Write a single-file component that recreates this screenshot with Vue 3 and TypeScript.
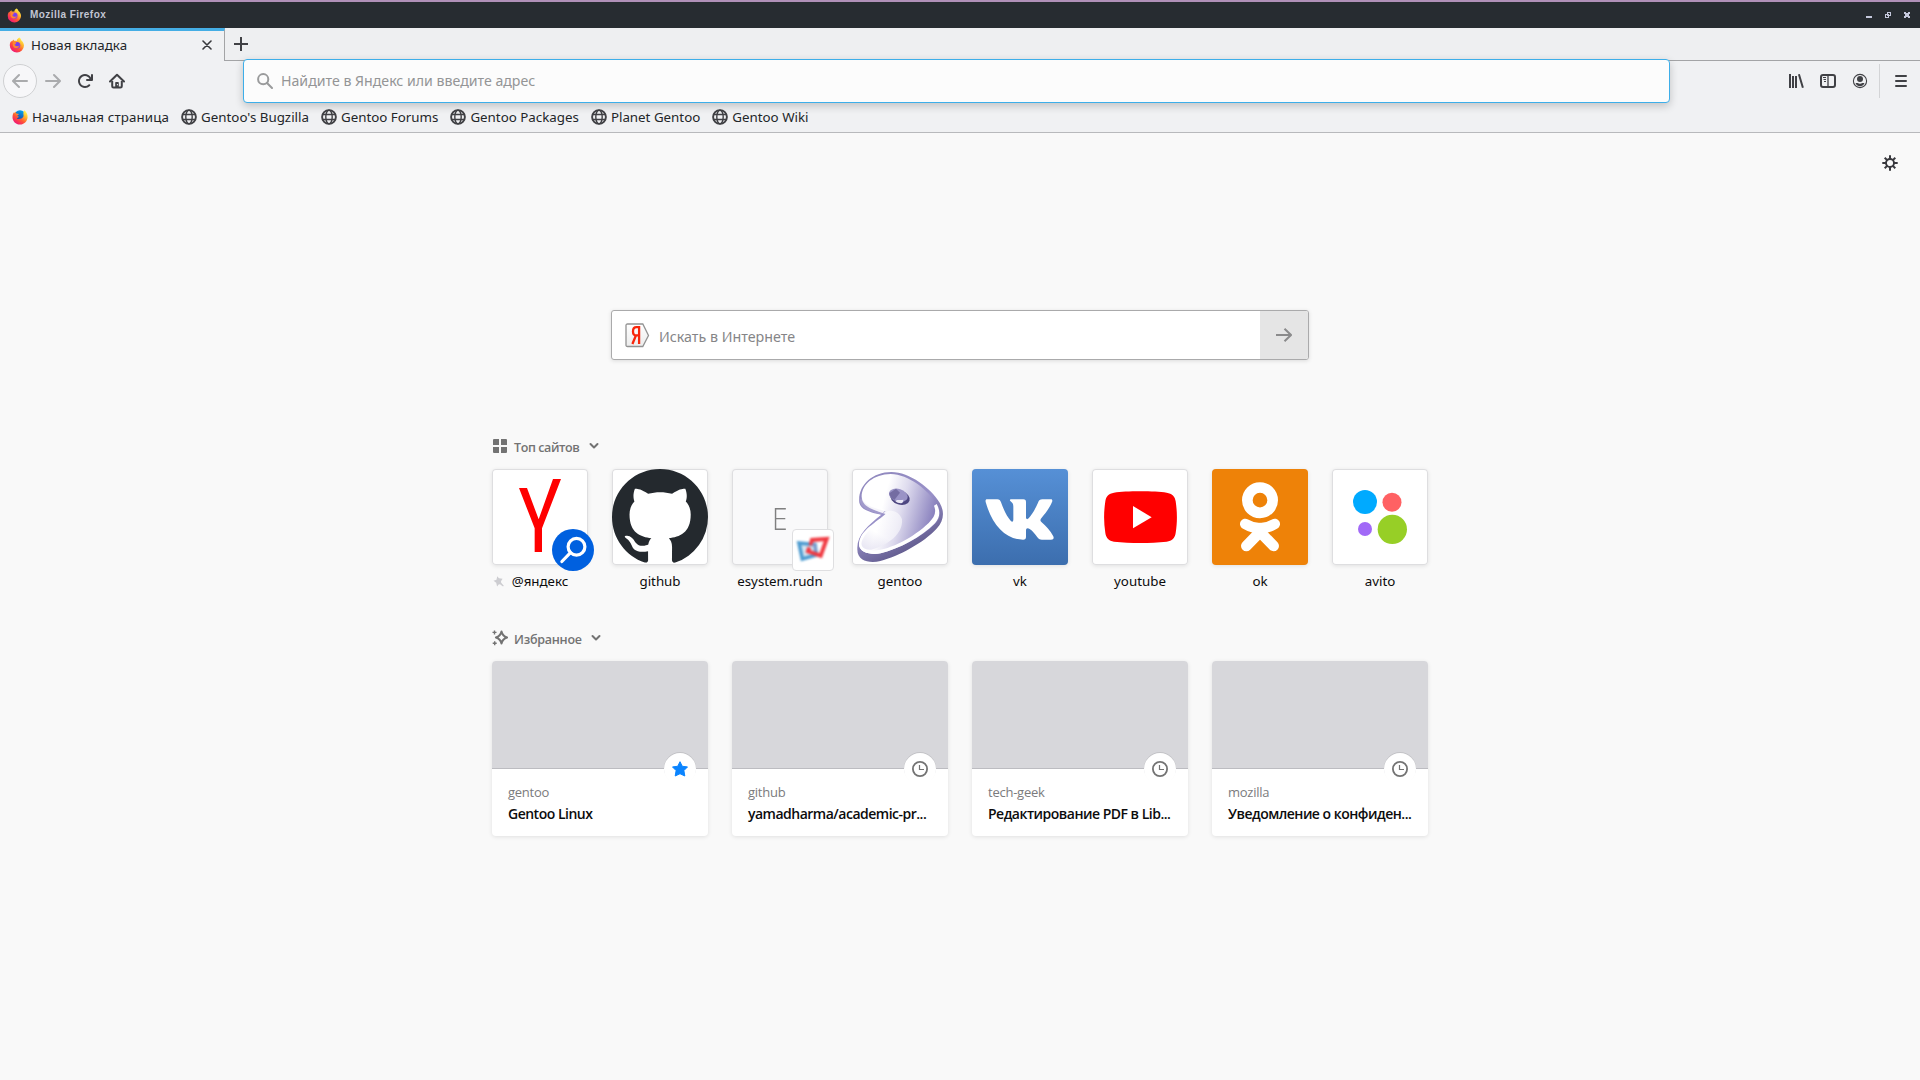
<script setup lang="ts">
interface Site { id: string; label: string; pinned?: boolean }
interface Card { host: string; title: string; starred?: boolean }

const bookmarks: string[] = ["Gentoo's Bugzilla", 'Gentoo Forums', 'Gentoo Packages', 'Planet Gentoo', 'Gentoo Wiki']

const sites: Site[] = [
  { id: 'yandex', label: '@яндекс', pinned: true },
  { id: 'github', label: 'github' },
  { id: 'esystem', label: 'esystem.rudn' },
  { id: 'gentoo', label: 'gentoo' },
  { id: 'vk', label: 'vk' },
  { id: 'youtube', label: 'youtube' },
  { id: 'ok', label: 'ok' },
  { id: 'avito', label: 'avito' },
]

const cards: Card[] = [
  { host: 'gentoo', title: 'Gentoo Linux', starred: true },
  { host: 'github', title: 'yamadharma/academic-pr...' },
  { host: 'tech-geek', title: 'Редактирование PDF в Lib...' },
  { host: 'mozilla', title: 'Уведомление о конфиден...' },
]
</script>

<template>
  <svg class="defs" width="0" height="0" aria-hidden="true">
    <defs>
      <linearGradient id="fxBody" x1="0.85" y1="0.1" x2="0.2" y2="0.95">
        <stop offset="0" stop-color="#fff44f" />
        <stop offset="0.3" stop-color="#ffb12c" />
        <stop offset="0.6" stop-color="#ff5634" />
        <stop offset="1" stop-color="#f0127a" />
      </linearGradient>
      <linearGradient id="fxBlue" x1="0.7" y1="0" x2="0.3" y2="1">
        <stop offset="0" stop-color="#00a8f0" />
        <stop offset="1" stop-color="#20309a" />
      </linearGradient>
      <linearGradient id="vkBg" x1="0" y1="0" x2="0" y2="1">
        <stop offset="0" stop-color="#5690d6" />
        <stop offset="1" stop-color="#3c6eae" />
      </linearGradient>
      <linearGradient id="gnRim" x1="0" y1="0" x2="0.5" y2="1">
        <stop offset="0" stop-color="#8f88bd" />
        <stop offset="0.55" stop-color="#9890c8" />
        <stop offset="1" stop-color="#5c5688" />
      </linearGradient>
      <linearGradient id="gnFace" x1="0.15" y1="0.3" x2="0.92" y2="0.5">
        <stop offset="0.2" stop-color="#ffffff" />
        <stop offset="0.5" stop-color="#dedbee" />
        <stop offset="1" stop-color="#8b83bf" />
      </linearGradient>
      <linearGradient id="gnLow" x1="0.2" y1="1" x2="0.7" y2="0.2">
        <stop offset="0" stop-color="#d9d6ec" />
        <stop offset="0.5" stop-color="#ffffff" />
      </linearGradient>
      <symbol id="firefox" viewBox="0 0 16 16">
        <path fill="url(#fxBody)" d="M10.3.6c1.1.7 1.7 1.7 1.9 2.7 1.4.9 2.8 3 2.8 5.3A7.1 7.1 0 0 1 8 15.5 7.1 7.1 0 0 1 .8 8.4c0-1.9.5-3.5 1.7-4.7l.2 1.1c.5-1.1 1.3-1.9 2.1-2.3l.2 1.3c1-.3 1.9-.1 2.7.1.2-1.4 1.1-2.5 2.6-3.3z" />
        <circle cx="8" cy="8.2" r="3.3" fill="#a03bd8" />
        <path fill="#ff8a2b" d="M4.2 5.1c1.4-.4 2.6.1 3.3 1-.4.7-1.2 1-1.9 1.2 0 1.2.9 2 2.1 1.9 1-.1 1.6-.9 2.6-.7-.7 2-2.3 2.9-4.1 2.5C4.1 10.6 3.1 7.6 4.2 5.1z" />
        <circle cx="8.6" cy="7.4" r="1.8" fill="#6d45ee" />
      </symbol>
      <symbol id="firefoxOld" viewBox="0 0 16 16">
        <circle cx="8" cy="7" r="5.8" fill="url(#fxBlue)" />
        <path fill="url(#fxBody)" d="M12.4 1.2C14.6 3 15.8 5.500 15.600 8.300 15.300 12.500 12 15.600 8 15.600 3.700 15.600.5 12.400.5 8.300.5 5.900 1.300 4 2.100 3l.2 1.300c.5-.9.9-1.300 1.500-1.700-.1.9.2 1.500.6 2 .9-.1 1.800.1 2.500.5-.2.9-1.100 1.300-1.800 1.700.3.600 1.500.5 1.800 1-.3.900-1.700.9-1.900 1.700 1 1.200 3.100.3 4.500 0 1.500-.6 2.300-2 2-3.400-.2-1.800-.4-3.300.9-4.900z" />
      </symbol>
      <symbol id="globe" viewBox="0 0 16 16">
        <g fill="none" stroke="#404145">
          <circle cx="8" cy="8" r="6.900" stroke-width="1.900" />
          <ellipse cx="8" cy="8" rx="3.200" ry="6.900" stroke-width="1.400" />
          <path d="M1.500 5.500h13M1.500 10.500h13" stroke-width="1.300" />
        </g>
      </symbol>
    </defs>
  </svg>

  <div class="window">
    <header class="titlebar">
      <svg class="title-logo" width="15" height="15"><use href="#firefox" /></svg>
      <span class="title-text">Mozilla Firefox</span>
      <svg class="win-controls" width="46" height="8" viewBox="0 0 46 8" shape-rendering="crispEdges">
        <path d="M1 5h6v2H1z" fill="#c5c8dc" />
        <path d="M22.500 1.500h3v3h-3zM20.500 3.500h3v3h-3z" fill="none" stroke="#c5c8dc" />
        <path d="M39 1h2v1h2V1h2v2h-1v2h1v2h-2V6h-2v1h-2V5h1V3h-1z" fill="#c5c8dc" />
      </svg>
    </header>

    <div class="tabstrip">
      <div class="tab">
        <svg width="16" height="16"><use href="#firefox" /></svg>
        <span class="tab-title">Новая вкладка</span>
        <svg class="tab-close" width="10" height="10" viewBox="0 0 10 10"><path d="M1 1l8 8M9 1L1 9" stroke="#38393d" stroke-width="1.600" stroke-linecap="round" /></svg>
      </div>
      <div class="strip-rest">
        <svg width="14" height="14" viewBox="0 0 14 14"><path d="M7 0.500v13M.5 7h13" stroke="#404145" stroke-width="2" stroke-linecap="round" /></svg>
      </div>
    </div>

    <div class="toolbar">
      <div class="nav">
        <span class="back">
          <svg width="16" height="16" viewBox="0 0 16 16"><path class="arrow" d="M15 8H1.500M7 2L1 8l6 6" /></svg>
        </span>
        <svg width="16" height="16" viewBox="0 0 16 16"><path class="arrow" d="M1 8h13.500M9 2l6 6-6 6" /></svg>
        <svg width="16" height="16" viewBox="0 0 16 16"><path fill="#404145" d="M15 1a1 1 0 0 0-1 1v2.418A6.995 6.995 0 1 0 8 15a6.954 6.954 0 0 0 4.950-2.050 1 1 0 0 0-1.414-1.414A5.019 5.019 0 1 1 12.549 6H10a1 1 0 0 0 0 2h5a1 1 0 0 0 1-1V2a1 1 0 0 0-1-1z" /></svg>
        <svg width="16" height="16" viewBox="0 0 16 16">
          <path d="M1 8.500L8 1.700l7 6.800" fill="none" stroke="#404145" stroke-width="2" stroke-linecap="round" stroke-linejoin="round" />
          <path d="M3.200 8v5.200c0 .9.600 1.400 1.400 1.400h6.800c.8 0 1.400-.5 1.400-1.400V8" fill="none" stroke="#404145" stroke-width="2" />
          <path d="M6.200 15v-5c0-.6.400-1 1-1h1.600c.6 0 1 .4 1 1v5z" fill="#404145" />
          <path d="M7.900 11h1v1.200h-1z" fill="#f0f1f3" />
        </svg>
      </div>
      <div class="urlbar">
        <svg width="16" height="16" viewBox="0 0 16 16" fill="none" stroke="#9a9b9c" stroke-width="2"><circle cx="6.200" cy="6.200" r="5.100" /><path d="M10 10l5 5" stroke-linecap="round" /></svg>
        <span class="url-hint">Найдите в Яндекс или введите адрес</span>
      </div>
      <div class="tools">
        <svg width="16" height="16" viewBox="0 0 16 16" stroke="#404145" stroke-width="2"><path d="M2 1v14M5 3v12M8 3v12M10.900 1.300l4 13.400" /></svg>
        <svg width="16" height="16" viewBox="0 0 16 16" fill="none" stroke="#404145"><rect x="1" y="2" width="14" height="12" rx="2" stroke-width="2" /><path d="M8 2.500v11" stroke-width="1.300" /><path d="M3 4.500h3M3.500 6.500H6M4 8.500h2" /></svg>
        <svg width="16" height="16" viewBox="0 0 16 16"><circle cx="8" cy="8" r="6.600" fill="none" stroke="#404145" stroke-width="1.100" /><circle cx="8" cy="6" r="3" fill="#404145" /><path d="M3.500 10.200c1-.3 1.500-.4 2.200-.1 1.400.8 3.200.8 4.600 0 .7-.3 1.200-.2 2.200.1C11.600 12 10 13.200 8 13.200S4.400 12 3.500 10.200z" fill="#404145" /></svg>
      </div>
      <svg class="menu" width="12" height="12" viewBox="0 0 12 12" stroke="#404145" stroke-width="2" stroke-linecap="round"><path d="M1 1h10M1 6h10M1 11h10" /></svg>
    </div>

    <nav class="bookmarks">
      <span class="bookmark start"><svg width="16" height="16"><use href="#firefoxOld" /></svg>Начальная страница</span>
      <span v-for="name in bookmarks" :key="name" class="bookmark">
        <svg width="16" height="16"><use href="#globe" /></svg>{{ name }}
      </span>
    </nav>

    <main class="page">
      <svg class="gear" width="16" height="16" viewBox="0 0 16 16" fill="none" stroke="#38383d">
        <circle cx="8" cy="8" r="4" stroke-width="1.900" />
        <path d="M8 .3V4M8 12v3.700M.3 8H4M12 8h3.700M2.700 2.700l2.200 2.200M11.100 11.100l2.200 2.200M13.300 2.700l-2.200 2.200M4.900 11.100l-2.200 2.200" stroke-width="2" />
      </svg>

      <div class="search">
        <svg class="ya" width="25" height="25" viewBox="0 0 25 25">
          <defs><linearGradient id="yaBg" x1="0" y1="0" x2="0" y2="1"><stop offset="0" stop-color="#fff" /><stop offset="1" stop-color="#ececec" /></linearGradient></defs>
          <path d="M2.500 1h15.300L23.500 12.500 17.800 23.500H2.500Q1 23.500 1 22V2.500Q1 1 2.500 1z" fill="url(#yaBg)" stroke="#929292" stroke-width="1.300" />
          <path d="M14.100 21V4.200h-2.600C9.200 4.200 8 5.800 8 8.400s1.300 4 3.300 4h2.700M10.900 12.500L7.400 21" fill="none" stroke="#f8260c" stroke-width="2.300" />
        </svg>
        <span class="search-hint">Искать в Интернете</span>
        <span class="search-go">
          <svg width="16" height="14" viewBox="0 0 16 14"><path d="M0 7h15M8.500 .7L15 7l-6.500 6.300" fill="none" stroke="#8b8b8c" stroke-width="2" /></svg>
        </span>
      </div>

      <h2 class="heading top-heading">
        <svg width="16" height="16" viewBox="0 0 16 16"><path d="M2 1h5v6H1V2a1 1 0 0 1 1-1zM9 1h5a1 1 0 0 1 1 1v5H9zM1 9h6v6H2a1 1 0 0 1-1-1zM9 9h6v5a1 1 0 0 1-1 1H9z" fill="#737373" /></svg>
        <span>Топ сайтов</span>
        <svg class="chev" width="10" height="8" viewBox="0 0 10 8"><path d="M1.500 2L5 5.500 8.500 2" /></svg>
      </h2>

      <div class="sites">
        <div v-for="s in sites" :key="s.id" class="site">
          <div class="tile" :class="s.id">
            <svg v-if="s.id === 'yandex'" viewBox="36 117 288 288">
              <path fill="#f00" d="M117 174h24l35 94 43-121h24l-57 148v71h-22v-71z" />
            </svg>
            <svg v-else-if="s.id === 'github'" viewBox="0 0 16 16">
              <path fill="#24292e" d="M8 0C3.580 0 0 3.580 0 8c0 3.540 2.290 6.530 5.470 7.590.4.070.55-.17.55-.38 0-.19-.01-.82-.01-1.490-2.010.37-2.530-.49-2.690-.94-.09-.23-.48-.94-.82-1.130-.28-.15-.68-.52-.01-.53.63-.01 1.080.58 1.230.82.72 1.210 1.870.87 2.330.66.07-.52.28-.87.51-1.070-1.780-.2-3.640-.89-3.640-3.950 0-.87.31-1.590.82-2.150-.08-.2-.36-1.020.08-2.120 0 0 .67-.21 2.200.82.64-.18 1.320-.27 2-.27.68 0 1.360.09 2 .27 1.530-1.040 2.200-.82 2.200-.82.44 1.100.16 1.920.08 2.120.51.56.82 1.270.82 2.150 0 3.070-1.870 3.750-3.650 3.950.29.25.54.73.54 1.480 0 1.070-.01 1.930-.01 2.200 0 .21.15.46.55.38A8.013 8.013 0 0 0 16 8c0-4.420-3.580-8-8-8z" />
            </svg>
            <span v-else-if="s.id === 'esystem'" class="letter">E</span>
            <svg v-else-if="s.id === 'gentoo'" viewBox="396 27 288 288">
              <path fill="url(#gnRim)" d="M418 128C412 78 456 36 514 36c55 0 119 49 145 92 16 28 12 55-8 77-40 44-115 84-170 98-30 7-70 2-69-36-2-42 32-71 72-103-22-4-61-12-66-36z" />
              <path fill="url(#gnFace)" d="M425 112C424 74 460 43 512 42c54 1 112 47 140 92 12 21 10 38-5 56-43 43-110 76-165 90-30 6-63-3-65-25 0-40 40-60 80-93-24-8-68-23-72-50z" />
              <path fill="#fff" d="M650 132c12 22 10 40-5 58-43 43-106 76-163 90-30 6-63-3-65-25 5-14 9-18 16-27-13 22-7 43 28 44 52-3 121-41 165-83 18-18 24-32 16-52z" />
              <path fill="url(#gnLow)" opacity=".55" d="M428 238c15-30 60-60 74-84 22-6 38 8 44 24 4 45-44 78-92 91-27 2-35-13-26-31z" />
              <path fill="#a79fce" opacity=".7" d="M425 112c4 27 48 34 72 42l-12 10c-27-7-65-16-66-45z" />
              <path fill="#fff" opacity=".85" d="M430 112c8 20 40 30 66 38l-8 9c-26-8-60-20-62-43z" />
              <ellipse cx="540" cy="113" rx="30" ry="21" fill="#4d4680" transform="rotate(18 540 113)" />
              <ellipse cx="535" cy="106" rx="29" ry="19" fill="#9a93c6" transform="rotate(18 535 106)" />
              <path fill="#6a6399" d="M508 100l20-14 12 12-17 22c-9-4-14-11-15-20z" opacity=".8" />
              <path fill="#e9e7f4" d="M526 124c6-8 14-1 24-5 0 6-2 10-7 11-7 0-13-2-17-6z" />
            </svg>
            <svg v-else-if="s.id === 'vk'" viewBox="36 27 288 288">
              <rect x="36" y="27" width="288" height="288" fill="url(#vkBg)" />
              <path fill="#fff" d="M81 118h31c6 0 9 4 11 9 9 25 19 44 29 55 5 6 8 3 8-4v-38c0-9-3-12-9-17-3-3-1-5 3-5h36c6 0 8 3 8 8v46c0 6 4 7 8 3 11-12 20-29 28-47 3-7 6-10 13-10h25c5 0 6 3 4 8-6 15-18 32-31 47-5 6-5 9 0 14 13 12 26 25 34 40 4 7 2 12-6 12h-27c-7 0-11-4-15-9-7-9-13-17-22-23-6-4-11-3-11 5v18c0 6-2 9-9 9-52 0-93-44-112-113-1-5 0-8 4-8z" />
            </svg>
            <svg v-else-if="s.id === 'youtube'" viewBox="396 27 288 288">
              <path fill="#f00" d="M541 94c32 0 60 1 79 4 16 3 25 11 27 26 5 33 5 62 0 95-2 15-11 24-27 26-50 5-108 5-158 0-15-2-24-11-26-26-5-33-5-62 0-95 2-15 10-23 26-26 19-3 47-4 79-4z" />
              <path fill="#fff" d="M519 138l56 34-56 33z" />
            </svg>
            <svg v-else-if="s.id === 'ok'" viewBox="36 27 288 288">
              <rect x="36" y="27" width="288" height="288" fill="#ee8208" />
              <g fill="none" stroke="#fff" stroke-linecap="round">
                <circle cx="180" cy="120.500" r="38" stroke-width="32" />
                <path d="M136 192q44 26 88 0" stroke-width="32" />
                <path d="M139 258l41-42 41 42M180 204v10" stroke-width="32" />
              </g>
            </svg>
            <svg v-else viewBox="396 27 288 288">
              <circle cx="495" cy="126" r="36" fill="#0af" /><circle cx="576" cy="127" r="28.500" fill="#ff6163" />
              <circle cx="495" cy="207" r="21" fill="#a169f7" /><circle cx="577" cy="208" r="44" fill="#97cf26" />
            </svg>
          </div>
          <svg v-if="s.id === 'yandex'" class="glass" viewBox="0 0 42 42">
            <circle cx="21" cy="21" r="21" fill="#0060df" />
            <g fill="none" stroke="#fff" stroke-width="3.200" stroke-linecap="round"><circle cx="24.500" cy="17.700" r="8.400" /><path d="M18.500 23.700l-8.600 8.800" /></g>
          </svg>
          <div v-if="s.id === 'esystem'" class="favicon">
            <svg width="42" height="42" viewBox="216 206 126 126" fill="none" stroke-width="11">
              <path d="M237 248l48 5 4 31-42 12z" fill="#d5e6f2" stroke="#4c9bd0" />
              <path d="M272 256l4-17 44-3-18 50-38-13 4-12" stroke="#f03a42" stroke-width="12" />
              <path d="M276 252l9 3 3 18" stroke="#8a9ac8" stroke-width="7" />
            </svg>
          </div>
          <div class="label">
            <svg v-if="s.pinned" class="pin" width="11" height="11" viewBox="0 0 11 11"><path fill="#cdcdd1" d="M4.200.3L6 2.200l3.600.6L8 5.200l.2 1.500 2.600 3-.8.7-3-2.200-1.400.3-1.500 1.900-.9-3.700L.5 4.700l3-.9z" /></svg>
            <span>{{ s.label }}</span>
          </div>
        </div>
      </div>

      <h2 class="heading fav-heading">
        <svg width="16" height="16" viewBox="0 0 16 16" fill="none" stroke="#737373">
          <path d="M9.500 1.500c.7 3.400 2.100 5 5.600 6-3.500 1-4.900 2.500-5.600 6-.7-3.500-2.100-5-5.600-6 3.500-1 4.900-2.600 5.600-6z" stroke-width="2" stroke-linejoin="round" />
          <path d="M2.500 .4v4M.5 2.400h4M2.700 11.300v4M.7 13.300h4" stroke-width="1.400" />
        </svg>
        <span>Избранное</span>
        <svg class="chev" width="10" height="8" viewBox="0 0 10 8"><path d="M1.500 2L5 5.500 8.500 2" /></svg>
      </h2>

      <div class="cards">
        <article v-for="c in cards" :key="c.host" class="card">
          <div class="preview"></div>
          <div class="badge">
            <svg v-if="c.starred" width="16" height="16" viewBox="0 0 16 16"><path fill="#0a84ff" stroke="#0a84ff" stroke-linejoin="round" d="M8 .7l2.300 4.600 5.200.6-3.600 3.700.9 5.400L8 12.700 3.200 15l.9-5.400L.5 5.900l5.200-.6z" /></svg>
            <svg v-else width="16" height="16" viewBox="0 0 16 16" fill="none" stroke="#737373"><circle cx="8" cy="8" r="7.100" stroke-width="1.800" /><path d="M7.500 4v4.500H12" stroke-width="1.200" /></svg>
          </div>
          <div class="card-text">
            <div class="host">{{ c.host }}</div>
            <div class="title">{{ c.title }}</div>
          </div>
        </article>
      </div>
    </main>
  </div>
</template>

<style>
html, body { margin: 0; background: #f9f9fa; overflow: hidden; }
</style>

<style scoped>
.defs { position: absolute; }
svg { display: block; flex: none; }
.window { width: 1920px; height: 1080px; display: flex; flex-direction: column; overflow: hidden; background: #f9f9f9; color: #232629; font-family: "Noto Sans", "Open Sans", sans-serif; font-size: 13.33px; white-space: nowrap; }
.titlebar { box-sizing: border-box; height: 28px; flex: none; border-top: 2px solid #b090b8; background: #272c31; display: flex; align-items: center; padding: 0 9px 0 7px; }
.title-text { margin-left: 8px; font: bold 10px "Liberation Sans", Arial, sans-serif; letter-spacing: .45px; color: #c2c5d3; padding-bottom: 1px; }
.win-controls { margin-left: auto; }

.tabstrip { height: 33px; flex: none; display: flex; background: #eeeff1; }
.tab { box-sizing: border-box; width: 225px; padding: 0 12px 2px 9px; border-top: 3px solid #45aee5; border-right: 1px solid #a3a4a6; background: #f0f1f3; display: flex; align-items: center; }
.tab-title { margin-left: 6px; }
.tab-close { margin-left: auto; }
.strip-rest { box-sizing: border-box; flex: 1; border-bottom: 1px solid #a3a4a6; padding: 9px 0 0 9px; }

.toolbar { height: 40px; flex: none; display: flex; align-items: center; background: #f0f1f3; }
.nav { box-sizing: border-box; width: 243px; padding-left: 3px; display: flex; align-items: center; gap: 16px; }
.back { box-sizing: border-box; width: 34px; height: 34px; margin-right: -8px; border: 1px solid #cfd0d2; border-radius: 50%; background: #f7f7f9; display: flex; align-items: center; justify-content: center; }
.arrow { fill: none; stroke: #aaabad; stroke-width: 2; stroke-linecap: round; stroke-linejoin: round; }
.urlbar { box-sizing: border-box; width: 1427px; height: 44px; flex: none; z-index: 2; padding-left: 13px; display: flex; align-items: center; gap: 8px; border: 1px solid #3daee9; border-radius: 4px; background: #fcfcfc; color: #949596; font-size: 14.15px; box-shadow: 0 3px 9px rgba(0, 0, 0, .2); }
.url-hint { padding-bottom: 1px; }
.tools { box-sizing: border-box; height: 34px; width: 210px; padding-right: 11px; display: flex; align-items: center; justify-content: flex-end; gap: 16px; border-right: 1px solid #d3d4d6; }
.menu { margin-left: 15px; }

.bookmarks { box-sizing: border-box; height: 32px; flex: none; padding: 0 0 0 12px; display: flex; align-items: center; gap: 12px; border-bottom: 1px solid #b8b9bc; background: #f0f1f3; }
.bookmark { display: flex; align-items: center; gap: 4px; }
.bookmark.start { letter-spacing: .13px; }

.page { flex: 1; display: flex; flex-direction: column; align-items: center; }
.gear { align-self: flex-end; margin: 22px 22px 0 0; }
.search { box-sizing: border-box; width: 698px; height: 50px; margin-top: 139px; border: 1px solid #aaaaab; border-radius: 3px; background: #fff; display: flex; align-items: center; padding-left: 13px; overflow: hidden; box-shadow: 0 1px 4px rgba(0, 0, 0, .12); }
.search-hint { margin: 2px 0 0 9px; font-size: 14.25px; color: #858587; }
.search-go { width: 48px; align-self: stretch; margin-left: auto; background: #e5e5e5; display: flex; align-items: center; justify-content: center; }

.heading { width: 936px; height: 18px; margin: 0; display: flex; align-items: center; font-family: "Open Sans", "Noto Sans", sans-serif; font-size: 12.5px; font-weight: 600; letter-spacing: -.25px; color: #737373; }
.heading span { margin-left: 6px; padding-top: 2px; }
.chev { margin-left: 9px; fill: none; stroke: #737373; stroke-width: 2; stroke-linecap: round; stroke-linejoin: round; }
.top-heading { margin-top: 77px; }
.top-heading span { padding-top: 3px; margin-right: 1px; letter-spacing: -.4px; }
.sites { width: 936px; margin-top: 14px; display: flex; gap: 24px; }
.site { position: relative; width: 96px; }
.tile { width: 96px; height: 96px; border-radius: 4px; background: #fff; overflow: hidden; box-shadow: inset 0 0 0 1px #dedee0, 0 1px 4px rgba(12, 12, 13, .1); display: flex; align-items: center; justify-content: center; }
.tile svg { width: 96px; height: 96px; }
.tile.github { overflow: visible; }
.tile.esystem { background: #f9f9fa; }
.letter { font-family: "Open Sans", "Noto Sans", sans-serif; font-size: 32px; font-weight: 300; color: #808080; line-height: 32px; padding: 2px 1px 0 0; transform: scaleX(.88); }
.glass { position: absolute; left: 60px; top: 60px; width: 42px; height: 42px; }
.favicon { box-sizing: border-box; position: absolute; left: 60px; top: 60px; width: 42px; height: 42px; border: 1px solid #dfdfe1; border-radius: 4px; background: #fff; display: flex; align-items: center; justify-content: center; }
.favicon svg { filter: blur(.8px); }
.label { height: 20px; margin-top: 6px; display: flex; align-items: center; justify-content: center; color: #0c0c0d; }
.pin { margin: 0 8px 0 -19px; }

.fav-heading { margin-top: 38px; }
.cards { width: 936px; margin-top: 14px; display: flex; gap: 24px; }
.card { position: relative; width: 216px; height: 175px; border-radius: 4px; background: #fff; box-shadow: 0 1px 4px rgba(12, 12, 13, .1); }
.preview { box-sizing: border-box; height: 108px; border-bottom: 1px solid #bcbcc1; border-radius: 4px 4px 0 0; background: #d7d7db; }
.badge { position: absolute; right: 12px; top: 92px; width: 32px; height: 32px; border-radius: 50%; background: #fff; display: flex; align-items: center; justify-content: center; box-shadow: 0 -1px 0 #c2c2c6; }
.card-text { padding: 12px 16px 0; font-family: "Open Sans", "Noto Sans", sans-serif; }
.host { font-size: 13px; letter-spacing: -.25px; line-height: 22px; color: #7b7b7d; }
.title { margin-top: 1px; font-size: 14px; letter-spacing: -.5px; line-height: 20px; font-weight: 600; color: #0c0c0d; }
</style>
